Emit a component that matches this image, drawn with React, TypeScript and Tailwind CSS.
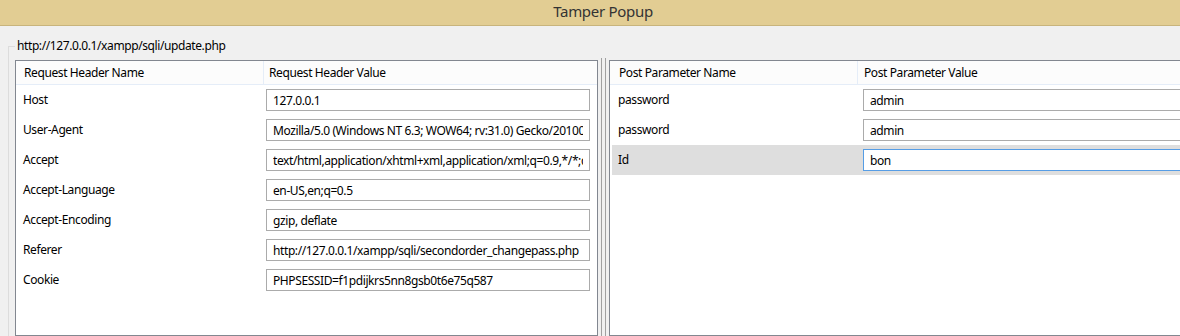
import React from 'react';

interface Param {
  name: string;
  value: string;
  selected?: boolean;
}

const headers: Param[] = [
  { name: 'Host', value: '127.0.0.1' },
  { name: 'User-Agent', value: 'Mozilla/5.0 (Windows NT 6.3; WOW64; rv:31.0) Gecko/20100101 Firefox/31.0' },
  { name: 'Accept', value: 'text/html,application/xhtml+xml,application/xml;q=0.9,*/*;q=0.8' },
  { name: 'Accept-Language', value: 'en-US,en;q=0.5' },
  { name: 'Accept-Encoding', value: 'gzip, deflate' },
  { name: 'Referer', value: 'http://127.0.0.1/xampp/sqli/secondorder_changepass.php' },
  { name: 'Cookie', value: 'PHPSESSID=f1pdijkrs5nn8gsb0t6e75q587' },
];

const postParams: Param[] = [
  { name: 'password', value: 'admin' },
  { name: 'password', value: 'admin' },
  { name: 'Id', value: 'bon', selected: true },
];

const ParamRow: React.FC<{ row: Param; nameWidth: string; inputWidth: string }> = ({ row, nameWidth, inputWidth }) => (
  <div className={`flex items-center h-[30px] ${row.selected ? 'bg-[#dedede]' : ''}`}>
    <div className={`${nameWidth} shrink-0 pl-[6px]`}>{row.name}</div>
    <input
      readOnly
      value={row.value}
      className={`${inputWidth} shrink-0 h-[22px] bg-white border px-[6px] outline-none text-black tracking-[-0.4px] ${
        row.selected ? 'border-[#569de5]' : 'border-[#ababab]'
      }`}
    />
  </div>
);

export default function App() {
  return (
    <div
      className="w-[1180px] h-[336px] overflow-hidden bg-[#f0f0f0] text-[12px] tracking-[-0.4px] text-black flex flex-col"
      style={{ fontFamily: '"Noto Sans", "Open Sans", sans-serif' }}
    >
      <div className="h-[26px] shrink-0 bg-[#e2cd93] border-b border-[#c8b47c] flex items-center justify-center pl-[26px] pb-[2px] text-[15px] tracking-[-0.3px] text-[#333]">
        Tamper Popup
      </div>

      <div className="flex-1 pl-[8px] pt-[20px] flex flex-col min-h-0">
        <div className="flex-1 flex flex-col border-l border-[#dcdcdc] min-h-0">
          <div className="flex items-center h-[14px] -mt-[7px] leading-[14px]">
            <span className="w-[6px] h-px bg-[#dcdcdc]" />
            <span className="pl-[2px]">http://127.0.0.1/xampp/sqli/update.php</span>
          </div>

          <div className="flex-1 flex pl-[6px] pt-[5px] min-h-0">
            {/* request headers */}
            <div className="w-[583px] shrink-0 mt-[2px] border border-[#828790] bg-white flex flex-col">
              <div className="flex h-[24px] items-center bg-[#fcfcfc] border-b border-[#e5edf8]">
                <div className="w-[248px] h-full flex items-center pl-[8px] border-r border-[#e5edf8]">
                  Request Header Name
                </div>
                <div className="pl-[5px]">Request Header Value</div>
              </div>
              <div className="pl-[1px]">
                {headers.map((h) => (
                  <ParamRow key={h.name} row={h} nameWidth="w-[249px]" inputWidth="w-[324px]" />
                ))}
              </div>
            </div>

            {/* splitter */}
            <div className="w-[11px] shrink-0 flex justify-center gap-[3px]">
              <div className="w-px bg-[#a0a0a0]" />
              <div className="w-px bg-[#a0a0a0]" />
            </div>

            {/* post parameters */}
            <div className="w-[600px] shrink-0 mt-[2px] border border-[#828790] bg-white flex flex-col">
              <div className="flex h-[24px] items-center bg-[#fcfcfc] border-b border-[#e5edf8]">
                <div className="w-[248px] h-full flex items-center pl-[9px] border-r border-[#e5edf8]">
                  Post Parameter Name
                </div>
                <div className="pl-[6px]">Post Parameter Value</div>
              </div>
              <div className="pl-[2px]">
                {postParams.map((p, i) => (
                  <ParamRow key={i} row={p} nameWidth="w-[251px]" inputWidth="w-[400px]" />
                ))}
              </div>
            </div>
          </div>
        </div>
      </div>
    </div>
  );
}
